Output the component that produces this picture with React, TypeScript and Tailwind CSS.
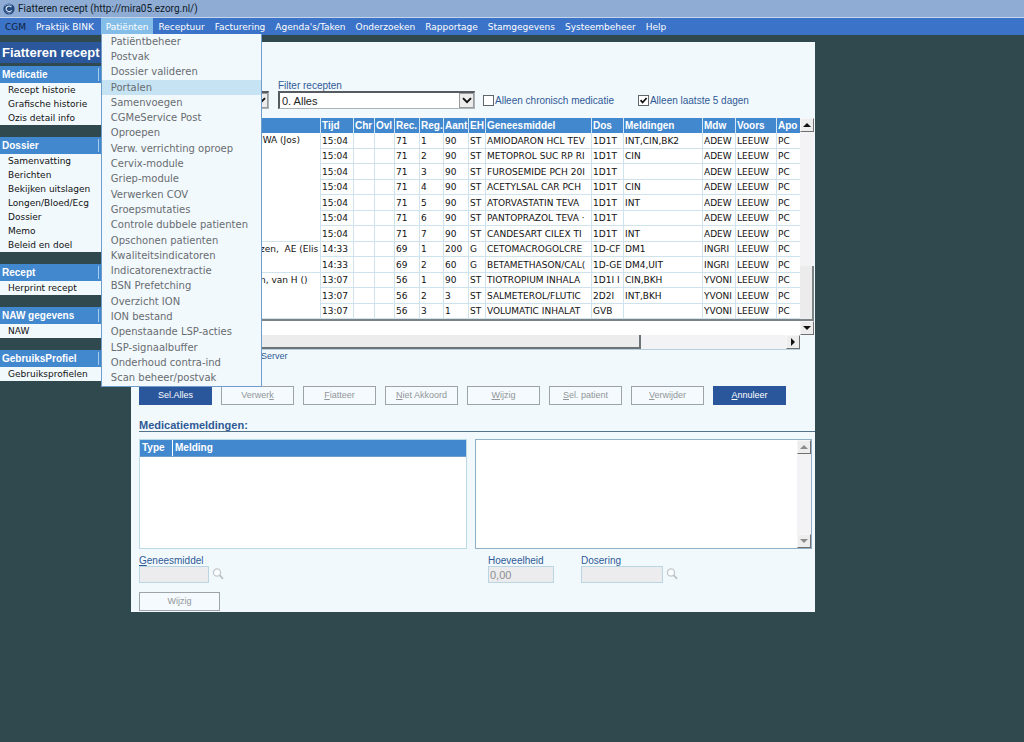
import type { ReactNode } from "react";

const MENU = [
  "CGM",
  "Praktijk BINK",
  "Patiënten",
  "Receptuur",
  "Facturering",
  "Agenda's/Taken",
  "Onderzoeken",
  "Rapportage",
  "Stamgegevens",
  "Systeembeheer",
  "Help",
];

const PATIENT_MENU = [
  "Patiëntbeheer",
  "Postvak",
  "Dossier valideren",
  "Portalen",
  "Samenvoegen",
  "CGMeService Post",
  "Oproepen",
  "Verw. verrichting oproep",
  "Cervix-module",
  "Griep-module",
  "Verwerken COV",
  "Groepsmutaties",
  "Controle dubbele patienten",
  "Opschonen patienten",
  "Kwaliteitsindicatoren",
  "Indicatorenextractie",
  "BSN Prefetching",
  "Overzicht ION",
  "ION bestand",
  "Openstaande LSP-acties",
  "LSP-signaalbuffer",
  "Onderhoud contra-ind",
  "Scan beheer/postvak",
];

const SECTIONS = [
  { title: "Medicatie", items: ["Recept historie", "Grafische historie", "Ozis detail info"] },
  {
    title: "Dossier",
    items: ["Samenvatting", "Berichten", "Bekijken uitslagen", "Longen/Bloed/Ecg", "Dossier", "Memo", "Beleid en doel"],
  },
  { title: "Recept", items: ["Herprint recept"] },
  { title: "NAW gegevens", items: ["NAW"] },
  { title: "GebruiksProfiel", items: ["Gebruiksprofielen"] },
];

const COLUMNS = [
  { label: "", width: "" },
  { label: "Tijd", width: "w-[33px]" },
  { label: "Chr", width: "w-[21px]" },
  { label: "Ovl", width: "w-[20px]" },
  { label: "Rec.", width: "w-[25px]" },
  { label: "Reg.", width: "w-[24px]" },
  { label: "Aant", width: "w-[25px]" },
  { label: "EH", width: "w-[17px]" },
  { label: "Geneesmiddel", width: "w-[106px]" },
  { label: "Dos", width: "w-[32px]" },
  { label: "Meldingen", width: "w-[79px]" },
  { label: "Mdw", width: "w-[33px]" },
  { label: "Voors", width: "w-[41px]" },
  { label: "Apo", width: "w-[24px]" },
];

interface Patient {
  name: string;
  rows: string[][];
}

const PATIENTS: Patient[] = [
  {
    name: "JWA (Jos)",
    rows: [
      ["15:04", "", "", "71", "1", "90", "ST", "AMIODARON HCL TEV", "1D1T", "INT,CIN,BK2", "ADEW", "LEEUW", "PC"],
      ["15:04", "", "", "71", "2", "90", "ST", "METOPROL SUC RP RI", "1D1T", "CIN", "ADEW", "LEEUW", "PC"],
      ["15:04", "", "", "71", "3", "90", "ST", "FUROSEMIDE PCH 20I", "1D1T", "", "ADEW", "LEEUW", "PC"],
      ["15:04", "", "", "71", "4", "90", "ST", "ACETYLSAL CAR PCH", "1D1T", "CIN", "ADEW", "LEEUW", "PC"],
      ["15:04", "", "", "71", "5", "90", "ST", "ATORVASTATIN TEVA", "1D1T", "INT", "ADEW", "LEEUW", "PC"],
      ["15:04", "", "", "71", "6", "90", "ST", "PANTOPRAZOL TEVA ·", "1D1T", "", "ADEW", "LEEUW", "PC"],
      ["15:04", "", "", "71", "7", "90", "ST", "CANDESART CILEX TI", "1D1T", "INT", "ADEW", "LEEUW", "PC"],
    ],
  },
  {
    name: "zen,  AE (Elis",
    rows: [
      ["14:33", "", "", "69", "1", "200", "G", "CETOMACROGOLCRE", "1D-CF", "DM1", "INGRI", "LEEUW", "PC"],
      ["14:33", "", "", "69", "2", "60", "G", "BETAMETHASON/CAL(", "1D-GE", "DM4,UIT", "INGRI", "LEEUW", "PC"],
    ],
  },
  {
    name: "n, van H ()",
    rows: [
      ["13:07", "", "", "56", "1", "90", "ST", "TIOTROPIUM INHALA", "1D1I I", "CIN,BKH", "YVONI", "LEEUW", "PC"],
      ["13:07", "", "", "56", "2", "3", "ST", "SALMETEROL/FLUTIC", "2D2I", "INT,BKH", "YVONI", "LEEUW", "PC"],
      ["13:07", "", "", "56", "3", "1", "ST", "VOLUMATIC INHALAT", "GVB", "", "YVONI", "LEEUW", "PC"],
    ],
  },
];

const VERDANA = "font-['DejaVu_Sans',sans-serif]";

function TitleBar() {
  return (
    <header className="flex h-[17px] items-center gap-[3px] bg-[#8fadd4] pl-[3px] font-['Roboto',sans-serif] text-[10px] text-[#101a28]">
      <svg viewBox="0 0 12 12" className="size-3 shrink-0" aria-hidden="true">
        <circle cx="6" cy="6" r="5.6" fill="#254a80" />
        <path d="M1 7a5 4 0 0 0 9 1 5 5 0 0 1-9-1z" fill="#b9d2ee" />
        <path d="M8.4 4.2a3 2.6 0 1 0 .2 3" fill="none" stroke="#e6f0fa" strokeWidth="1.1" />
        <path d="M2 3.2a5 5 0 0 1 7-1" fill="none" stroke="#86a9d6" strokeWidth=".8" />
      </svg>
      <h1>Fiatteren recept (http://mira05.ezorg.nl/)</h1>
    </header>
  );
}

function MenuBar() {
  return (
    <nav className={`flex h-[18px] border-t border-[#c5d6ec] bg-[#3b73c8] text-[9px] leading-4 text-white ${VERDANA}`}>
      {MENU.map((item) => {
        if (item === "Patiënten") {
          return (
            <div key={item} className="relative ml-[2px] bg-[#83bde8]">
              <button className="block h-[17px] px-[5px]">{item}</button>
              <div className="absolute top-[16px] left-0 z-10 flex h-[353px] w-[161px] flex-col border border-t-0 border-[#6f9cc8] bg-[#f2f9fd] text-[10px] leading-[14px] text-[#686c70]">
                {PATIENT_MENU.map((entry) => (
                  <button
                    key={entry}
                    className={`flex min-h-0 flex-1 items-center pl-[9px] whitespace-nowrap ${entry === "Portalen" ? "bg-[#c5e3f3]" : ""}`}
                  >
                    {entry}
                  </button>
                ))}
              </div>
            </div>
          );
        }
        return (
          <button key={item} className={`px-[5px] whitespace-nowrap ${item === "CGM" ? "text-[#10203c]" : ""}`}>
            {item}
          </button>
        );
      })}
    </nav>
  );
}

function Sidebar() {
  return (
    <aside className="w-[101px] shrink-0">
      <h2 className="h-[21px] overflow-hidden bg-[#2b589c] pl-[2px] text-[13px] leading-[21px] font-bold whitespace-nowrap text-white">
        Fiatteren recept
      </h2>
      <div className="mt-[3px] flex flex-col gap-3">
        {SECTIONS.map((section) => (
          <section key={section.title}>
            <h3 className="flex h-[17px] items-center justify-between bg-[#4288cf] pr-[2px] pl-[2px] text-[10px] font-bold text-white">
              {section.title}
              <span className="h-[13px] w-px bg-[#a5cdf0]" />
            </h3>
            <ul className={`bg-[#f2f9fd] pl-2 text-[9px] leading-[14px] text-[#111] ${VERDANA}`}>
              {section.items.map((item) => (
                <li key={item} className="whitespace-nowrap">
                  <a href="#">{item}</a>
                </li>
              ))}
            </ul>
          </section>
        ))}
      </div>
    </aside>
  );
}

interface DropdownProps {
  label?: string;
  id: string;
  value?: string;
  className: string;
}

function Dropdown({ label, id, value, className }: DropdownProps) {
  return (
    <div className={className}>
      {label && (
        <label htmlFor={id} className="block h-[11px] leading-[11px]">
          {label}
        </label>
      )}
      <div className="relative h-[18px] border border-t-2 border-l-2 border-[#a9b4ba] border-t-[#555b60] border-l-[#555b60] bg-white">
        <select
          id={id}
          aria-label={label ?? id}
          className="block h-full w-full appearance-none bg-white pl-[2px] text-[11px] leading-[14px] text-[#222]"
        >
          <option>{value}</option>
        </select>
        <span className="pointer-events-none absolute top-0 right-0 flex h-full w-[15px] items-center justify-center border border-[#9a9a9a] bg-[#ececec]">
          <svg viewBox="0 0 10 7" className="h-[7px] w-[10px]" aria-hidden="true">
            <path d="M1 1.2l4 4 4-4" fill="none" stroke="#111" strokeWidth="1.9" />
          </svg>
        </span>
      </div>
    </div>
  );
}

function Check({ label, checked }: { label: string; checked?: boolean }) {
  return (
    <label className="flex items-center gap-px whitespace-nowrap">
      <span className="relative size-[11px]">
        <input
          type="checkbox"
          defaultChecked={checked}
          className="peer block size-[11px] appearance-none border border-[#60666a] bg-white"
        />
        <svg viewBox="0 0 11 11" className="pointer-events-none absolute inset-0 hidden peer-checked:block" aria-hidden="true">
          <path d="M2.6 5.2l2 2.3 4-4.5" fill="none" stroke="#111" strokeWidth="1.8" />
        </svg>
      </span>
      {label}
    </label>
  );
}

function Arrow({ dir, color }: { dir: "up" | "down" | "right"; color: string }) {
  const points = { up: "0,6 8,6 4,2", down: "0,2 8,2 4,6", right: "2,0 2,8 6,4" };
  return (
    <svg viewBox="0 0 8 8" className="size-2" aria-hidden="true">
      <polygon points={points[dir]} fill={color} />
    </svg>
  );
}

const scrollButton =
  "flex h-[14px] w-[14px] shrink-0 items-center justify-center border border-[#f6f6f6] border-r-[#707070] border-b-[#707070] bg-[#ededed]";

function PrescriptionGrid() {
  return (
    <div className="mr-px mt-[9px] flex">
      <div className="min-w-0 flex-1">
        <table className={`w-full table-fixed border-separate border-spacing-0 bg-white text-[9px] text-[#111] ${VERDANA}`}>
          <thead>
            <tr className="h-[15px] bg-[#4288cf] text-left font-['Liberation_Sans',Arial,sans-serif] text-[10px] leading-[14px] text-white">
              {COLUMNS.map((col, i) => (
                <th
                  key={i}
                  className={`overflow-hidden p-0 pl-px whitespace-nowrap ${i > 0 ? "border-l border-[#d3e6f5]" : ""} ${col.width}`}
                >
                  {col.label}
                </th>
              ))}
            </tr>
          </thead>
          <tbody>
            {PATIENTS.map((patient) =>
              patient.rows.map((row, i) => (
                <tr key={`${patient.name}-${i}`} className="odd:h-[16px] even:h-[15px]">
                  {i === 0 && (
                    <td
                      rowSpan={patient.rows.length}
                      className="overflow-hidden border-b border-[#cfe3ee] p-0 pl-[121px] align-top leading-[15px] whitespace-pre"
                    >
                      {patient.name}
                    </td>
                  )}
                  {row.map((cell, j) => (
                    <td
                      key={j}
                      className="overflow-hidden border-b border-l border-[#cfe3ee] p-0 pl-px leading-[14px] whitespace-nowrap"
                    >
                      {cell}
                    </td>
                  ))}
                </tr>
              )),
            )}
          </tbody>
        </table>
        <div className="h-[16px] border-t-2 border-[#7b8387] bg-white" />
        <div className="flex h-[15px] border-b border-[#b8d0dc] bg-[#f3f3f5]">
          <div className="w-[76%] border-r-2 border-b-2 border-[#6c7478] bg-[#ececec]" />
          <button aria-label="Naar rechts" className={`ml-auto ${scrollButton}`}>
            <Arrow dir="right" color="#111" />
          </button>
        </div>
      </div>
      <div className="mb-[15px] flex w-[14px] flex-col bg-[#f3f3f5]">
        <button aria-label="Omhoog" className={scrollButton}>
          <Arrow dir="up" color="#111" />
        </button>
        <div className="mt-auto h-[55px] border-r-2 border-b-2 border-[#7b8387] bg-[#ececec]" />
        <button aria-label="Omlaag" className={scrollButton}>
          <Arrow dir="down" color="#111" />
        </button>
      </div>
    </div>
  );
}

function ActionButton({ children, primary }: { children: ReactNode; primary?: boolean }) {
  return (
    <button
      className={`h-[19px] w-[73px] border text-[9px] whitespace-nowrap ${
        primary ? "border-[#2a579c] bg-[#2a579c] text-white" : "border-[#9da3a7] bg-[#f4fafd] text-[#929699]"
      }`}
    >
      {children}
    </button>
  );
}

function SearchIcon() {
  return (
    <svg viewBox="0 0 12 12" className="mb-[3px] size-3" aria-hidden="true">
      <circle cx="5" cy="4.5" r="3.6" fill="#fafcfd" stroke="#c3c9cd" strokeWidth="1.3" />
      <path d="M7.6 7.2l3.4 3.6" stroke="#bcc1c6" strokeWidth="1.9" />
    </svg>
  );
}

interface FieldProps {
  id: string;
  label: ReactNode;
  width: string;
  value?: string;
}

function Field({ id, label, width, value }: FieldProps) {
  return (
    <div>
      <label htmlFor={id} className="block h-[11px] leading-[11px]">
        {label}
      </label>
      <input
        id={id}
        disabled
        defaultValue={value}
        className={`block h-[17px] border border-[#b9d6e2] bg-[#ececee] px-px text-[11px] text-[#8b8e92] ${width}`}
      />
    </div>
  );
}

function Main() {
  return (
    <main className="w-full max-w-[684px] min-w-0 bg-[#f2f9fd] pt-[38px] pb-px pl-2 text-[10px] text-[#2f5a96]">
      <div className="flex items-end">
        <Dropdown id="medewerker" className="w-[130px]" />
        <Dropdown id="filter" label="Filter recepten" value="0. Alles" className="ml-[9px] w-[197px]" />
        <div className="ml-2 flex h-[18px] items-center gap-6">
          <Check label="Alleen chronisch medicatie" />
          <Check label="Alleen laatste 5 dagen" checked />
        </div>
      </div>

      <PrescriptionGrid />

      <p className="pl-[122px] text-[9px] leading-[12px]">Server</p>

      <div className="mt-6 flex gap-[9px]">
        <ActionButton primary>Sel.Alles</ActionButton>
        <ActionButton>Verwer<u>k</u></ActionButton>
        <ActionButton><u>F</u>iatteer</ActionButton>
        <ActionButton><u>N</u>iet Akkoord</ActionButton>
        <ActionButton><u>W</u>ijzig</ActionButton>
        <ActionButton><u>S</u>el. patient</ActionButton>
        <ActionButton><u>V</u>erwijder</ActionButton>
        <ActionButton primary><u>A</u>nnuleer</ActionButton>
      </div>

      <h2 className="mt-[14px] border-b border-[#55728c] text-[11px] leading-[12px] font-bold">Medicatiemeldingen:</h2>

      <div className="mt-[7px] mr-[3px] flex h-[110px] gap-2">
        <div className="w-[328px] border border-[#bcd9e6] bg-white">
          <table className="w-full border-separate border-spacing-0 border-b border-[#6f9cc8]">
            <thead>
              <tr className="h-[16px] bg-[#4288cf] text-left leading-[14px] text-white">
                <th className="w-[32px] p-0 pl-[2px]">Type</th>
                <th className="border-l border-white p-0 pl-[2px]">Melding</th>
              </tr>
            </thead>
          </table>
        </div>
        <div className="flex flex-1 border border-[#8fb0c6] bg-white">
          <textarea aria-label="Toelichting" className="block min-w-0 flex-1 resize-none bg-white" />
          <div className="flex w-[14px] flex-col justify-between bg-[#f3f3f5]">
            <button aria-label="Omhoog" className={scrollButton}>
              <Arrow dir="up" color="#8b8b8b" />
            </button>
            <button aria-label="Omlaag" className={scrollButton}>
              <Arrow dir="down" color="#8b8b8b" />
            </button>
          </div>
        </div>
      </div>

      <div className="mt-[6px] flex">
        <div className="flex w-[349px] items-end gap-[3px]">
          <Field id="geneesmiddel" label={<><u>G</u>eneesmiddel</>} width="w-[70px]" />
          <SearchIcon />
        </div>
        <div className="w-[93px]">
          <Field id="hoeveelheid" label="Hoeveelheid" width="w-[66px]" value="0,00" />
        </div>
        <div className="flex items-end gap-[3px]">
          <Field id="dosering" label="Dosering" width="w-[82px]" />
          <SearchIcon />
        </div>
      </div>

      <button className="mt-[9px] block h-[19px] w-[81px] border border-[#9da3a7] bg-[#f4fafd] text-[9px] text-[#929699]">
        Wijzig
      </button>
    </main>
  );
}

export default function App() {
  return (
    <div className="min-h-screen bg-[#2f494f] font-['Liberation_Sans',Arial,sans-serif]">
      <TitleBar />
      <MenuBar />
      <div className="mt-[7px] flex gap-[30px]">
        <Sidebar />
        <Main />
      </div>
    </div>
  );
}
